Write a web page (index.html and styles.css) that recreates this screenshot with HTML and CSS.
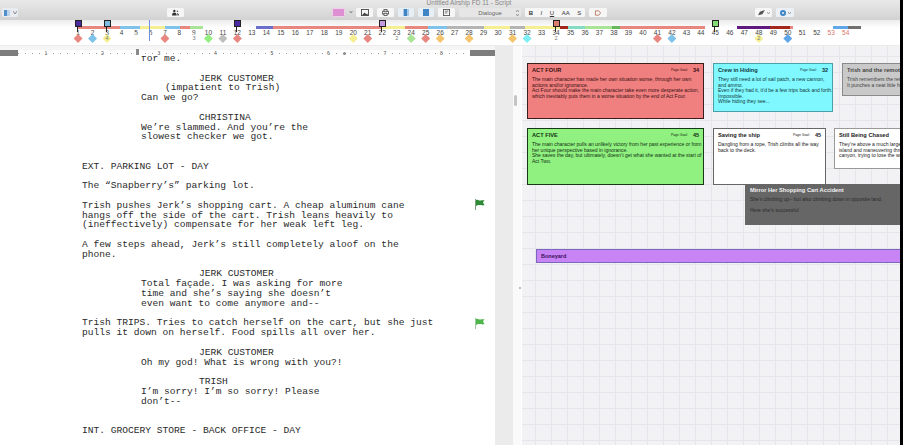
FILE: index.html
```html
<!DOCTYPE html>
<html lang="en">
<head>
    <meta charset="UTF-8">
    <title>Untitled Airship FD 11 - Script</title>
    <link rel="stylesheet" href="styles.css">
</head>
<body>
<div class="app">
    <div class="toolbar">
        <div class="window-title">Untitled Airship FD 11 - Script</div>
        <div class="tools">
            <button class="btn view-btn"><svg width="6" height="6" viewBox="0 0 6 6"><rect width="6" height="6" fill="#bcd3ea"/><rect width="3" height="6" fill="#4f8fcb"/></svg><svg class="caret" width="4" height="3" viewBox="0 0 4 3"><path d="M0 0l2 3 2-3" fill="none" stroke="#666" stroke-width=".7"/></svg></button>
            <button class="btn people-btn"><svg width="7" height="7" viewBox="0 0 9 8"><circle cx="3" cy="2" r="1.500" fill="#333"/><circle cx="7" cy="2.400" r="1" fill="#555"/><path d="M0 8c0-3 1-4 3-4s3 1 3 4z" fill="#333"/><path d="M6.500 4.500c1.500 0 2.500 1 2.500 3.500h-2z" fill="#555"/></svg></button>
            <button class="btn swatch-btn"></button>
            <svg class="caret swatch-caret" width="3" height="2" viewBox="0 0 4 3"><path d="M0 0l2 3 2-3" fill="none" stroke="#444" stroke-width=".8"/></svg>
            <button class="btn img-btn"><svg width="8" height="7" viewBox="0 0 9 8"><rect x=".5" y=".5" width="8" height="7" fill="none" stroke="#444"/><path d="M1 7l3-3 2 2 1-1 1 2z" fill="#444"/></svg></button>
            <button class="btn print-btn"><svg width="7" height="7" viewBox="0 0 9 9"><path d="M2.500 3V.5h4V3M2.500 6.500H.5V3h8v3.500h-2M2.500 5.500h4v3h-4z" fill="none" stroke="#333"/></svg></button>
            <button class="btn split-btn"><svg width="6" height="7" viewBox="0 0 6 7"><rect width="6" height="7" fill="#a9c9e8"/><rect x="1" width="3" height="7" fill="#3f85c6"/></svg></button>
            <button class="btn full-btn"><svg width="6" height="7" viewBox="0 0 6 7"><rect width="6" height="7" fill="#3f85c6"/></svg></button>
            <button class="btn card-btn"><svg width="7" height="7" viewBox="0 0 8 8"><rect x=".5" y=".5" width="7" height="7" fill="none" stroke="#555"/><path d="M2 2.500h4M2 4.500h3" stroke="#555" stroke-width=".8"/></svg></button>
            <div class="btn style-select">Dialogue<svg class="updown" width="3" height="6" viewBox="0 0 3 6"><path d="M0 2l1.500-2 1.500 2M0 4l1.500 2 1.500-2" fill="none" stroke="#666" stroke-width=".6"/></svg></div>
            <div class="btn format-group"><b>B</b><i>I</i><u>U</u><span>AA</span><span>S</span></div>
            <button class="btn tag-btn"><svg width="8" height="6" viewBox="0 0 8 7"><path d="M1 6V1h4l2 2.500L5 6z" fill="none" stroke="#b8705a"/></svg></button>
            <button class="btn pen-btn"><svg width="7" height="6" viewBox="0 0 8 7"><path d="M0 6l2-4 6-2-3 5z" fill="#555"/></svg><svg class="caret" width="3" height="2" viewBox="0 0 4 3"><path d="M0 0l2 3 2-3" fill="none" stroke="#666" stroke-width=".8"/></svg></button>
            <button class="btn eye-btn"><svg width="6" height="6" viewBox="0 0 7 7"><circle cx="3.500" cy="3.500" r="3.500" fill="#3f85c6"/><circle cx="3.500" cy="3.500" r="1.300" fill="#dfe9f2"/></svg><svg class="caret" width="3" height="2" viewBox="0 0 4 3"><path d="M0 0l2 3 2-3" fill="none" stroke="#666" stroke-width=".8"/></svg></button>
        </div>
    </div>

    <div class="timeline">
        <div class="flags">
            <span class="flag f-purple" style="grid-column: 1"></span>
            <span class="flag f-blue" style="grid-column: 3"></span>
            <span class="flag f-purple" style="grid-column: 12"></span>
            <span class="flag f-lilac" style="grid-column: 22"></span>
            <span class="flag f-salmon" style="grid-column: 34"></span>
            <span class="flag f-green" style="grid-column: 45"></span>
        </div>
        <div class="bars">
            <span class="c-red" style="width: 42px"></span>
            <span class="c-blue" style="width: 20px"></span>
            <span class="c-yellow" style="width: 25px"></span>
            <span class="c-blue" style="width: 15px"></span>
            <span class="c-red" style="width: 10px"></span>
            <span class="c-green" style="width: 13px"></span>
            <span style="width: 53px"></span>
            <span class="c-indigo" style="width: 17px"></span>
            <span class="c-red" style="width: 109px"></span>
            <span class="c-yellow" style="width: 23px"></span>
            <span class="c-red" style="width: 23px"></span>
            <span class="c-blue" style="width: 19px"></span>
            <span class="c-gray" style="width: 37px"></span>
            <span class="c-yellow" style="width: 26px"></span>
            <span class="c-gray" style="width: 15px"></span>
            <span class="c-yellow" style="width: 35px"></span>
            <span class="c-darkred" style="width: 8px"></span>
            <span class="c-teal" style="width: 17px"></span>
            <span class="c-green" style="width: 27px"></span>
            <span class="c-dkgreen" style="width: 8px"></span>
            <span class="c-red" style="width: 85px"></span>
            <span style="width: 32px"></span>
            <span class="c-purple" style="width: 33px"></span>
            <span class="c-darkred" style="width: 20px"></span>
            <span class="c-red" style="width: 3px"></span>
            <span style="width: 40px"></span>
            <span class="c-blue2" style="width: 15px"></span>
            <span class="c-dkgray" style="width: 13px"></span>
        </div>
        <div class="pages">
            <div>1<i class="c-red"></i></div>
            <div>2<i class="c-blue"></i></div>
            <div>3<i class="c-yellow">4</i></div>
            <div>4</div>
            <div>5<i class="c-white"></i></div>
            <div>6<i class="c-white"></i></div>
            <div>7<i class="c-red"></i></div>
            <div>8</div>
            <div>9<i class="c-white">3</i></div>
            <div>10<i class="c-lime"></i></div>
            <div>11<i class="c-silver"></i></div>
            <div>12<i class="c-red"></i></div>
            <div>13</div>
            <div>14</div>
            <div>15</div>
            <div>16</div>
            <div>17</div>
            <div>18</div>
            <div>19</div>
            <div>20<i class="c-yellow"></i></div>
            <div>21<i class="c-red"></i></div>
            <div>22<i class="c-white"></i></div>
            <div>23<i class="c-white">2</i></div>
            <div>24<i class="c-green"></i></div>
            <div>25<i class="c-red"></i></div>
            <div>26<i class="c-orange"></i></div>
            <div>27</div>
            <div>28<i class="c-orange"></i></div>
            <div>29<i class="c-white"></i></div>
            <div>30</div>
            <div>31<i class="c-orange"></i></div>
            <div>32<i class="c-cyan"></i></div>
            <div>33</div>
            <div>34<i class="c-white">2</i></div>
            <div>35<i class="c-white"></i></div>
            <div>36<i class="c-white"></i></div>
            <div>37<i class="c-white"></i></div>
            <div>38</div>
            <div>39</div>
            <div>40</div>
            <div>41<i class="c-red"></i></div>
            <div>42<i class="c-blue"></i></div>
            <div>43</div>
            <div>44</div>
            <div>45<i class="c-white"></i></div>
            <div>46</div>
            <div>47<i class="c-white"></i></div>
            <div>48<i class="c-yellow">2</i></div>
            <div>49</div>
            <div>50<i class="c-blue2"></i></div>
            <div>51</div>
            <div>52</div>
            <div class="late">53</div>
            <div class="late">54</div>
        </div>
        <span class="playhead"></span>
    </div>

    <div class="workspace">
        <div class="script-side">
            <div class="ruler">
                <div class="ruler-end left"></div>
                <div class="ruler-scale">
                    <span>1</span><span>2</span><span>3</span><span>4</span><span>5</span><span>6</span><span>7</span><span>8</span>
                    <em class="tab-stop"></em>
                    <em class="tab-end"></em>
                </div>
                <div class="ruler-end right"></div>
            </div>
            <div class="script">
                <div class="page">
                    <p class="dialogue">for me.</p>

                    <p class="character">JERK CUSTOMER</p>
                    <p class="paren">(impatient to Trish)</p>
                    <p class="dialogue">Can we go?</p>

                    <p class="character">CHRISTINA</p>
                    <p class="dialogue">We’re slammed. And you’re the</p>
                    <p class="dialogue">slowest checker we got.</p>

                    <p class="action gap2">EXT. PARKING LOT - DAY</p>

                    <p class="action gap">The “Snapberry’s” parking lot.</p>

                    <p class="action gap">Trish pushes Jerk’s shopping cart. A cheap aluminum cane</p>
                    <p class="action">hangs off the side of the cart. Trish leans heavily to</p>
                    <p class="action">(ineffectively) compensate for her weak left leg.</p>

                    <p class="action gap">A few steps ahead, Jerk’s still completely aloof on the</p>
                    <p class="action">phone.</p>

                    <p class="character">JERK CUSTOMER</p>
                    <p class="dialogue">Total façade. I was asking for more</p>
                    <p class="dialogue">time and she’s saying she doesn’t</p>
                    <p class="dialogue">even want to come anymore and--</p>

                    <p class="action gap">Trish TRIPS. Tries to catch herself on the cart, but she just</p>
                    <p class="action">pulls it down on herself. Food spills all over her.</p>

                    <p class="character">JERK CUSTOMER</p>
                    <p class="dialogue">Oh my god! What is wrong with you?!</p>

                    <p class="character">TRISH</p>
                    <p class="dialogue">I’m sorry! I’m so sorry! Please</p>
                    <p class="dialogue">don’t--</p>

                    <p class="action gap2">INT. GROCERY STORE - BACK OFFICE - DAY</p>
                </div>
                <svg class="note-flag one" width="11" height="11" viewBox="0 0 11 11"><path d="M1 0h1v11H1z" fill="#7f9f7f"/><path d="M2 1c2-1 3 1 5 .5s2 0 3.500-.5L9 3.500l1.500 2.500c-2 1-3 0-5 0S3 6.500 2 7z" fill="#2f8a35"/></svg>
                <svg class="note-flag two" width="11" height="11" viewBox="0 0 11 11"><path d="M1 0h1v11H1z" fill="#9fc79f"/><path d="M2 1c2-1 3 1 5 .5s2 0 3.500-.5L9 3.500l1.500 2.500c-2 1-3 0-5 0S3 6.500 2 7z" fill="#4eb54a"/></svg>
            </div>
        </div>

        <div class="gutter"></div>
        <div class="rail"><span class="thumb"></span><span class="grip"></span></div>

        <div class="board">
            <div class="card act-four">
                <div class="card-head"><b>ACT FOUR</b><small>Page Goal:</small><strong>34</strong></div>
                <p>The main character has made her own situation worse, through her own<br>actions and/or ignorance.<br>Act Four should make the main character take even more desperate action,<br>which inevitably puts them in a worse situation by the end of Act Four.</p>
            </div>
            <div class="card crew">
                <div class="card-head"><b>Crew in Hiding</b><small>Page Goal:</small><strong>32</strong></div>
                <p>They still need a lot of sail patch, a new cannon,<br>and ammo.<br>Even if they had it, it’d be a few trips back and forth.<br>Impossible.<br>While hiding they see...</p>
            </div>
            <div class="card remote">
                <div class="card-head"><b>Trish and the remote</b></div>
                <p>Trish remembers the remote.<br>It punches a neat little hole</p>
            </div>
            <div class="card act-five">
                <div class="card-head"><b>ACT FIVE</b><small>Page Goal:</small><strong>45</strong></div>
                <p>The main character pulls an unlikely victory from her past experience or from<br>her unique perspective based in ignorance.<br>She saves the day, but ultimately, doesn’t get what she wanted at the start of<br>Act Two.</p>
            </div>
            <div class="card saving">
                <div class="card-head"><b>Saving the ship</b><small>Page Goal:</small><strong>45</strong></div>
                <p>Dangling from a rope, Trish climbs all the way<br>back to the deck.</p>
            </div>
            <div class="card chased">
                <div class="card-head"><b>Still Being Chased</b></div>
                <p>They’re above a much larger<br>island and maneuvering through a<br>canyon, trying to lose the war</p>
            </div>
            <div class="card mirror">
                <div class="card-head"><b>Mirror Her Shopping Cart Accident</b></div>
                <p>She’s climbing up-- but also climbing down in opposite land.</p>
                <p class="spaced">Here she’s successful</p>
            </div>
            <div class="card boneyard"><b>Boneyard</b></div>
        </div>
    </div>
</div>
</body>
</html>
```

FILE: styles.css
```css
* {
    box-sizing: border-box;
}
html, body {
    margin: 0;
    padding: 0;
    height: 100%;
    overflow: hidden;
    background-color: #000;
}
.app {
    width: 900px;
    height: 445px;
    display: flex;
    flex-direction: column;
    overflow: hidden;
    background-color: #fff;
    font-family: "Liberation Sans", Arial, sans-serif;
}

/* toolbar */
.toolbar {
    height: 20px;
    background: linear-gradient(#e9e9e9, #d2d2d2);
}
.window-title {
    height: 8px;
    text-align: center;
    font-size: 6.500px;
    line-height: 5px;
    color: #858585;
    padding-left: 38px;
}
.tools {
    display: flex;
    align-items: flex-start;
    height: 9px;
}
.btn {
    height: 9px;
    flex: none;
    padding: 0;
    border: 0;
    border-radius: 1.500px;
    background-color: #f6f6f6;
    display: flex;
    align-items: center;
    justify-content: center;
    gap: 3px;
    font-family: "Liberation Sans", Arial, sans-serif;
}
.view-btn { width: 16px; margin-left: 2px; background-color: #e8ecf0; }
.people-btn { width: 17px; margin-left: 149px; }
.swatch-btn { width: 13px; margin-left: 148px; background-color: #dd90d2; border: 1px solid #f0d0ea; }
.swatch-caret { margin: 3px 0 0 4px; width: 4px; flex: none; }
.img-btn { width: 17px; margin-left: 3px; }
.print-btn { width: 17px; margin-left: 4px; }
.split-btn { width: 16px; margin-left: 4px; background-color: #e6eef6; }
.full-btn { width: 16px; margin-left: 4px; background-color: #e6eef6; }
.card-btn { width: 17px; margin-left: 4px; }
.style-select {
    width: 62px;
    margin-left: 4px;
    font-size: 6px;
    color: #666;
    position: relative;
    background-color: #e6e6e6;
}
.updown {
    position: absolute;
    right: 2px;
    top: 1.500px;
}
.format-group {
    width: 60px;
    margin-left: 4px;
    gap: 0;
    justify-content: space-around;
    font-size: 6px;
    color: #333;
}
.format-group i, .format-group u, .format-group span {
    font-weight: normal;
}
.tag-btn { width: 18px; margin-left: 4px; }
.pen-btn { width: 17px; margin-left: 148px; gap: 2px; }
.eye-btn { width: 18px; margin-left: 4px; gap: 2px; background-color: #eaf0f6; }

/* timeline */
.timeline {
    height: 26px;
    position: relative;
    background: linear-gradient(#ececec, #fff 8px);
    border-bottom: 1px solid #ececec;
}
.flags, .pages {
    display: grid;
    grid-template-columns: repeat(54, 14.490px);
    padding-left: 70.800px;
}
.flags {
    height: 6px;
}
.flag {
    position: relative;
    justify-self: center;
    width: 7px;
    height: 7px;
    border: 1px solid #222;
}
.flag::after {
    content: "";
    position: absolute;
    left: 1.500px;
    top: 5px;
    width: 1px;
    height: 6px;
    background-color: #222;
}
.f-purple { background-color: #4a2a9e; }
.f-blue { background-color: #80bcdf; }
.f-lilac { background-color: #c59bdf; }
.f-salmon { background-color: #dd7d6e; }
.f-green { background-color: #84dc76; }

.bars {
    display: flex;
    height: 3px;
    margin-left: 78px;
}
.bars span {
    display: block;
    flex: none;
}
.c-red { background-color: #e8877f; }
.c-blue { background-color: #7fc2ea; }
.c-blue2 { background-color: #5fa6e8; }
.c-yellow { background-color: #f5ef92; }
.c-green { background-color: #a9e396; }
.c-lime { background-color: #93ee7f; }
.c-indigo { background-color: #6b6fc9; }
.c-gray { background-color: #b4b4b4; }
.c-silver { background-color: #bdbdbd; }
.c-dkgray { background-color: #707070; }
.c-darkred { background-color: #a3271d; }
.c-teal { background-color: #84dcc4; }
.c-dkgreen { background-color: #66b85a; }
.c-purple { background-color: #5e1a80; }
.c-orange { background-color: #f5c46e; }
.c-cyan { background-color: #7eeef5; }
.c-white { background-color: #fff; }

.pages div {
    display: flex;
    flex-direction: column;
    align-items: center;
    height: 14px;
    font-size: 6.500px;
    line-height: 7px;
    color: #444;
    position: relative;
}
.pages .late {
    color: #d9736b;
}
.pages i {
    position: absolute;
    top: 5px;
    left: 2.750px;
    width: 9px;
    height: 9px;
    display: flex;
    align-items: center;
    justify-content: center;
    clip-path: polygon(50% 0, 100% 50%, 50% 100%, 0 50%);
    font-style: normal;
    font-size: 5.500px;
    color: #777;
}
.playhead {
    position: absolute;
    left: 149px;
    top: 0;
    width: 1px;
    height: 21px;
    background-color: #6f8fe0;
}

/* main area */
.workspace {
    flex: 1;
    display: flex;
    min-height: 0;
}
.script-side {
    width: 495px;
    display: flex;
    flex-direction: column;
    background-color: #fff;
}
.ruler {
    height: 10px;
    flex: none;
    display: flex;
    align-items: flex-end;
    background-color: #f5f5f5;
}
.ruler-end {
    height: 6px;
    background-color: #7d7d7d;
}
.ruler-end.left { width: 22px; }
.ruler-end.right { width: 30px; }
.ruler-scale {
    flex: 1;
    height: 6px;
    display: flex;
    position: relative;
    margin-left: -1px;
    background: #fff repeating-linear-gradient(90deg, #999 0 1px, transparent 1px 7.060px) 0 50% / 100% 1px no-repeat;
}
.ruler-scale span {
    width: 56.500px;
    flex: none;
    text-align: center;
    font-size: 5px;
    line-height: 6px;
    color: #555;
    text-shadow: 0 0 1px #fff, 0 0 1px #fff;
}
.tab-stop {
    position: absolute;
    left: 118px;
    top: -1px;
    width: 3px;
    height: 6px;
    background-color: #8a8a8a;
}
.tab-end {
    position: absolute;
    left: 325px;
    top: 2px;
    width: 3px;
    height: 3px;
    border-radius: 50%;
    background-color: #8a8a8a;
}
.script {
    flex: 1;
    position: relative;
    overflow: hidden;
    min-height: 0;
}
.page {
    margin-top: -2px;
    font-family: "Liberation Mono", "Courier New", monospace;
    font-size: 9.600px;
    line-height: 9.790px;
    color: #2a2a2a;
}
.page p {
    margin: 0;
    white-space: pre;
}
.page .gap { margin-top: 9.790px; }
.page .gap2 { margin-top: 19.580px; }
.action { padding-left: 82px; }
.dialogue { padding-left: 141px; }
.paren { padding-left: 165px; }
.page .character { padding-left: 199px; margin-top: 9.790px; }
.note-flag {
    position: absolute;
    left: 474px;
}
.note-flag.one { top: 143px; }
.note-flag.two { top: 262px; }

.gutter {
    width: 18px;
    flex: none;
    background-color: #ebebeb;
}
.rail {
    width: 9px;
    flex: none;
    position: relative;
    background-color: #fafafa;
    border-right: 1px solid #fff;
}
.thumb {
    position: absolute;
    left: 1px;
    top: 49px;
    width: 3px;
    height: 11px;
    border-radius: 2px;
    background-color: #c4c4c4;
}
.grip {
    position: absolute;
    left: 6px;
    top: 241px;
    width: 2px;
    height: 2px;
    background-color: #bbb;
}

/* corkboard, cards sit where the writer dropped them */
.board {
    flex: 1;
    position: relative;
    overflow: hidden;
    background-color: #f2f2f5;
    background-image: linear-gradient(#e6e6ea 1px, transparent 1px), linear-gradient(90deg, #e6e6ea 1px, transparent 1px);
    background-size: 16px 16px;
    background-position: 13px 10px;
}
.card {
    position: absolute;
    padding: 3px 4px;
    font-size: 5px;
    line-height: 5.600px;
    color: #222;
    border: 1px solid #666;
    overflow: hidden;
}
.card p {
    margin: 0;
    white-space: nowrap;
}
.card-head {
    display: flex;
    align-items: center;
    height: 7px;
    margin-bottom: 3px;
    font-size: 5.700px;
}
.card-head b {
    flex: 1;
    white-space: nowrap;
}
.card-head small {
    font-size: 3.400px;
    margin-right: 5px;
}
.card-head strong {
    font-size: 5.500px;
}
.act-four {
    left: 5px;
    top: 17px;
    width: 177px;
    height: 56px;
    background-color: #f08080;
    border: 1.500px solid #3d1c1c;
    color: #3a1010;
}
.crew {
    left: 191px;
    top: 17px;
    width: 120px;
    height: 49px;
    background-color: #80f8ff;
    border-color: #4a9fa8;
    color: #12383c;
}
.remote {
    left: 320px;
    top: 17px;
    width: 110px;
    height: 33px;
    background-color: #c9c9c9;
    border-color: #8a8a8a;
    color: #444;
}
.act-five {
    left: 5px;
    top: 82px;
    width: 177px;
    height: 57px;
    background-color: #90f080;
    border: 1.500px solid #143a14;
    color: #103010;
}
.saving {
    left: 191px;
    top: 82px;
    width: 113px;
    height: 57px;
    background-color: #fff;
    border: 1.500px solid #666;
}
.chased {
    left: 312px;
    top: 82px;
    width: 110px;
    height: 41px;
    background-color: #fff;
    border-color: #999;
}
.mirror {
    left: 223px;
    top: 138px;
    width: 160px;
    height: 41px;
    padding: 3px 5px;
    background-color: #666;
    border: 0;
    color: #2c2c2c;
}
.mirror .card-head {
    color: #f2f2f2;
}
.mirror .spaced {
    margin-top: 5.400px;
}
.boneyard {
    left: 14px;
    top: 203px;
    width: 380px;
    height: 14px;
    padding: 0 4px;
    line-height: 12px;
    font-size: 5.500px;
    background-color: #c884f4;
    border-color: #7a68c0;
    color: #3c1060;
}
```
